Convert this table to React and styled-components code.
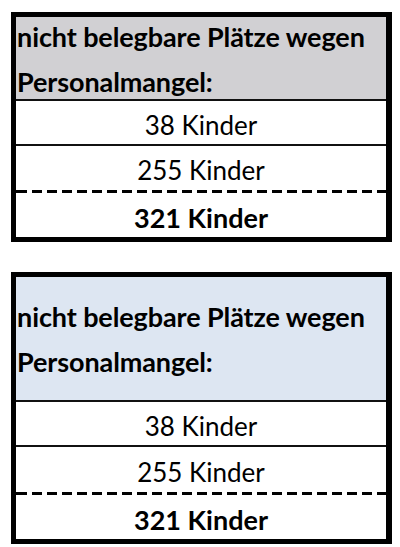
import React from "react";
import styled, { createGlobalStyle } from "styled-components";

const Global = createGlobalStyle`
  html, body { margin: 0; padding: 0; background: #fff; }
  body { font-family: "Lato", "Open Sans", sans-serif; color: #000; }
`;

const Page = styled.div`
  display: flex;
  flex-direction: column;
  gap: 30px;
  padding: 12px 0 0 11px;
  width: 381px;
`;

const Table = styled.div`
  border: 5px solid #000;
  border-right-width: 6px;
  display: flex;
  flex-direction: column;
`;

const Header = styled.div`
  height: ${(p) => p.$h}px;
  background: ${(p) => p.$bg};
  border-bottom: 2px solid #111;
  display: flex;
  align-items: center;
  padding-left: 1px;
  font-weight: 700;
  font-size: 27px;
  line-height: 45px;
  letter-spacing: -0.1px;
  overflow: visible;
`;

const HeaderText = styled.div`
  padding-top: ${(p) => p.$pt}px;
`;

const Row = styled.div`
  height: ${(p) => p.$h}px;
  display: flex;
  align-items: center;
  justify-content: center;
  font-size: ${(p) => (p.$bold ? 27 : 26)}px;
  font-weight: ${(p) => (p.$bold ? 700 : 400)};
  line-height: 1;
  padding-top: 4px;
  box-sizing: border-box;
  border-bottom: ${(p) => (p.$line ? "2px solid #111" : "none")};
`;

const Dashed = styled.div`
  height: 3px;
  background: repeating-linear-gradient(
    to right,
    #000 0,
    #000 10px,
    transparent 10px,
    transparent 15px
  );
  background-position: 1px 0;
`;

function Box({ bg, headerH, pt, r2 }) {
  return (
    <Table>
      <Header $h={headerH} $bg={bg}>
        <HeaderText $pt={pt}>
          nicht belegbare Plätze wegen
          <br />
          Personalmangel:
        </HeaderText>
      </Header>
      <Row $h={45} $line>38 Kinder</Row>
      <Row $h={r2}>255 Kinder</Row>
      <Dashed />
      <Row $h={44} $bold>321 Kinder</Row>
    </Table>
  );
}

export default function App() {
  return (
    <>
      <Global />
      <Page>
        <Box bg="#d1d0d3" headerH={82} pt={2} r2={44} />
        <Box bg="#dde6f2" headerH={123} pt={0} r2={45} />
      </Page>
    </>
  );
}
